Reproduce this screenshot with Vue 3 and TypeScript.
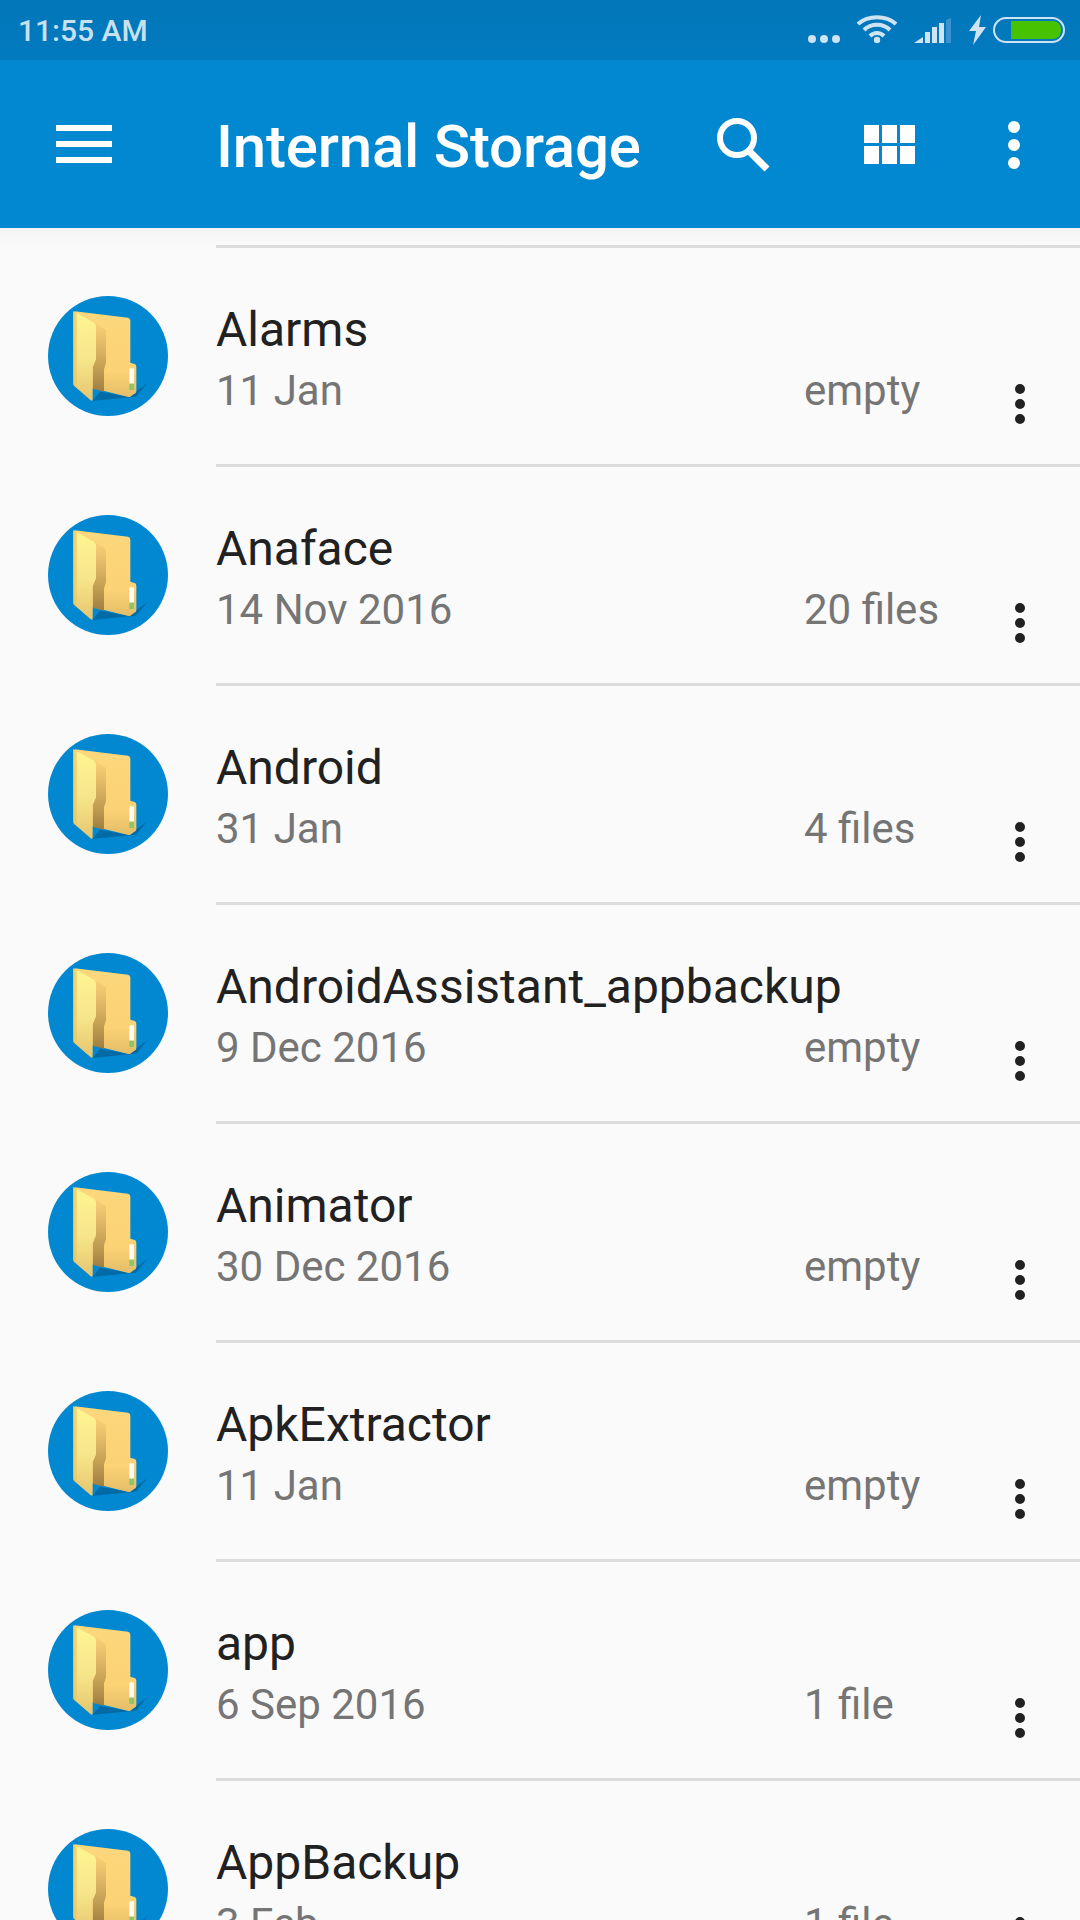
<template>
  <div class="screen">
    <div class="status-bar">
      <span class="time">11:55 AM</span>
      <div class="status-icons">
        <svg class="ic-dots" width="32" height="8" viewBox="0 0 32 8"><circle cx="4" cy="4" r="4" /><circle cx="16" cy="4" r="4" /><circle cx="28" cy="4" r="4" /></svg>
        <svg class="ic-wifi" width="40" height="29" viewBox="0 0 40 29">
          <path d="M1 9 C11 0 29 0 39 9" />
          <path d="M7 15 C14 8 26 8 33 15" />
          <path d="M13 21 C17 17 23 17 27 21" />
          <circle cx="20" cy="25" r="3.2" class="fill" />
        </svg>
        <svg class="ic-signal" width="37" height="25" viewBox="0 0 37 25">
          <path d="M0 25 L9 19 V25 Z" />
          <rect x="11" y="14" width="5" height="11" />
          <rect x="18" y="9" width="5" height="16" />
          <rect x="25" y="5" width="5" height="20" />
          <path class="off" d="M32 2 L37 0 V25 H32 Z" />
        </svg>
        <svg class="ic-bolt" width="17" height="30" viewBox="0 0 17 30"><path d="M12 0 L0 16 H7 L4 30 L17 12 H10 Z" /></svg>
        <div class="battery"><div class="battery-fill"></div></div>
      </div>
    </div>

    <header class="app-bar">
      <div class="menu-btn"><span></span><span></span><span></span></div>
      <h1 class="title">Internal Storage</h1>
      <svg class="ic-search" width="54" height="54" viewBox="0 0 54 54">
        <circle cx="20" cy="20" r="17" />
        <path d="M31 32 L50 51" />
      </svg>
      <div class="grid-btn"><span v-for="n in 6" :key="n"></span></div>
      <div class="kebab-white"><span></span><span></span><span></span></div>
    </header>

    <div class="list">
      <div class="top-sep"></div>
      <div v-for="f in folders" :key="f.name" class="row">
        <svg class="folder" width="120" height="120" viewBox="54 48 360 360">
          <defs>
            <linearGradient :id="'back-' + f.id" x1="0" y1="0" x2="0" y2="1">
              <stop offset="0" stop-color="#fdd77c" />
              <stop offset="0.7" stop-color="#fbd274" />
              <stop offset="1" stop-color="#e3bd68" />
            </linearGradient>
            <linearGradient :id="'front-' + f.id" x1="0" y1="0" x2="0" y2="1">
              <stop offset="0" stop-color="#fff592" />
              <stop offset="0.55" stop-color="#f7e58a" />
              <stop offset="1" stop-color="#e6c56f" />
            </linearGradient>
            <linearGradient :id="'shade-' + f.id" x1="0" y1="0" x2="0" y2="1">
              <stop offset="0" stop-color="#c99f55" stop-opacity="0.1" />
              <stop offset="0.5" stop-color="#b58f4b" stop-opacity="0.6" />
              <stop offset="1" stop-color="#9b7a3e" stop-opacity="0.95" />
            </linearGradient>
          </defs>
          <circle cx="234" cy="228" r="180" fill="#0288d1" />
          <path d="M188 362 L210 335 L296 350 L352 310 L318 350 L190 362 Z" fill="#026ba6" />
          <path d="M134 94 L294 113 Q301 114 301 122 V248 L314 252 Q319 254 319 260 V334 Q319 340 312 342 L300 351 Q297 352 292 350 L186 324 L134 300 Z" :fill="'url(#back-' + f.id + ')'" />
          <path d="M196 130 L228 150 V250 L222 268 V335 L188 327 V262 L198 238 Z" :fill="'url(#shade-' + f.id + ')'" />
          <path d="M130 94 L192 128 Q198 132 198 140 V234 Q198 240 194 246 L189 258 Q188 260 188 264 V358 Q188 364 182 361 L132 317 Q130 315 130 310 Z" :fill="'url(#front-' + f.id + ')'" />
          <path d="M130 94 L140 99 V323 L132 317 Q130 315 130 310 Z" fill="#e8c566" opacity="0.7" />
          <rect x="298" y="265" width="14" height="46" fill="#fbfbf8" />
          <rect x="298" y="311" width="14" height="19" fill="#8cc56a" />
        </svg>
        <div class="info">
          <div class="name">{{ f.name }}</div>
          <div class="meta">
            <span class="date">{{ f.date }}</span>
            <span class="size">{{ f.size }}</span>
            <div class="kebab"><span></span><span></span><span></span></div>
          </div>
        </div>
      </div>
    </div>
  </div>
</template>

<script setup lang="ts">
interface Folder {
  id: number;
  name: string;
  date: string;
  size: string;
}

const folders: Folder[] = [
  { id: 1, name: "Alarms", date: "11 Jan", size: "empty" },
  { id: 2, name: "Anaface", date: "14 Nov 2016", size: "20 files" },
  { id: 3, name: "Android", date: "31 Jan", size: "4 files" },
  { id: 4, name: "AndroidAssistant_appbackup", date: "9 Dec 2016", size: "empty" },
  { id: 5, name: "Animator", date: "30 Dec 2016", size: "empty" },
  { id: 6, name: "ApkExtractor", date: "11 Jan", size: "empty" },
  { id: 7, name: "app", date: "6 Sep 2016", size: "1 file" },
  { id: 8, name: "AppBackup", date: "3 Feb", size: "1 file" },
];
</script>

<style>
html,
body {
  margin: 0;
  background: #fafafa;
}
</style>

<style scoped>
.screen {
  width: 1080px;
  height: 1920px;
  overflow: hidden;
  background: #fafafa;
  font-family: Roboto, "Liberation Sans", sans-serif;
}

.status-bar {
  height: 60px;
  box-sizing: border-box;
  padding: 0 15px 0 18px;
  display: flex;
  align-items: center;
  justify-content: space-between;
  background: linear-gradient(to bottom, #0277ba, #027abf);
}

.time {
  font-size: 30px;
  font-weight: 500;
  color: rgba(255, 255, 255, 0.78);
}

.status-icons {
  display: flex;
  align-items: center;
  height: 60px;
}

.status-icons svg {
  fill: #cfe3f2;
  flex: none;
}

.ic-dots {
  margin: 18px 0 0 0;
}

.ic-wifi {
  margin: -1px 0 0 17px;
}

.ic-wifi path {
  fill: none;
  stroke: #cfe3f2;
  stroke-width: 4;
}

.ic-signal {
  margin: 1px 0 0 17px;
}

.status-icons .off {
  fill: #3a93cf;
}

.ic-bolt {
  margin: -1px 0 0 18px;
}

.battery {
  width: 72px;
  height: 26px;
  box-sizing: border-box;
  margin: 0 0 0 7px;
  border: 2px solid #cfe3f2;
  border-radius: 13px;
  padding: 2px;
  display: flex;
  justify-content: flex-end;
}

.battery-fill {
  width: 50px;
  height: 18px;
  background: #47c200;
  border-radius: 0 8px 8px 0;
}

.app-bar {
  height: 168px;
  display: flex;
  align-items: center;
  background: #0288d1;
}

.menu-btn {
  width: 56px;
  margin: 0 0 0 56px;
  display: flex;
  flex-direction: column;
  gap: 10px;
}

.menu-btn span {
  height: 6px;
  background: #fff;
}

.title {
  margin: 4px 0 0 104px;
  width: 501px;
  font-size: 60px;
  font-weight: 500;
  letter-spacing: -0.2px;
  color: #fff;
  white-space: nowrap;
}

.ic-search {
  flex: none;
  margin: 1px 0 0 0;
}

.ic-search circle {
  fill: none;
  stroke: #fff;
  stroke-width: 6;
}

.ic-search path {
  stroke: #fff;
  stroke-width: 7;
}

.grid-btn {
  flex: none;
  margin: 0 0 0 93px;
  width: 51px;
  display: grid;
  grid-template-columns: repeat(3, 15px);
  grid-auto-rows: 18px;
  gap: 3px;
}

.grid-btn span {
  background: #fff;
}

.kebab-white {
  flex: none;
  margin: 2px 0 0 93px;
  display: flex;
  flex-direction: column;
  gap: 6px;
}

.kebab-white span {
  width: 12px;
  height: 12px;
  border-radius: 50%;
  background: #fff;
}

.list {
  padding-top: 17px;
  background: linear-gradient(to bottom, #f4f4f4, #fafafa 20px);
}

.top-sep {
  height: 3px;
  margin-left: 216px;
  background: #dcdcdc;
}

.row {
  height: 219px;
  display: flex;
  align-items: flex-start;
}

.folder {
  flex: none;
  margin: 48px 0 0 48px;
}

.info {
  flex: 1;
  margin-left: 48px;
  height: 219px;
  box-sizing: border-box;
  padding-top: 54px;
  border-bottom: 3px solid #dcdcdc;
}

.name {
  font-size: 48px;
  line-height: 56px;
  color: #212121;
  white-space: nowrap;
}

.meta {
  display: flex;
  align-items: flex-start;
  font-size: 42px;
  line-height: 50px;
  color: #757575;
  margin-top: 8px;
}

.date {
  width: 588px;
}

.size {
  width: 211px;
}

.kebab {
  display: flex;
  flex-direction: column;
  gap: 5px;
  margin-top: 18px;
}

.kebab span {
  width: 10px;
  height: 10px;
  border-radius: 50%;
  background: #212121;
}
</style>
